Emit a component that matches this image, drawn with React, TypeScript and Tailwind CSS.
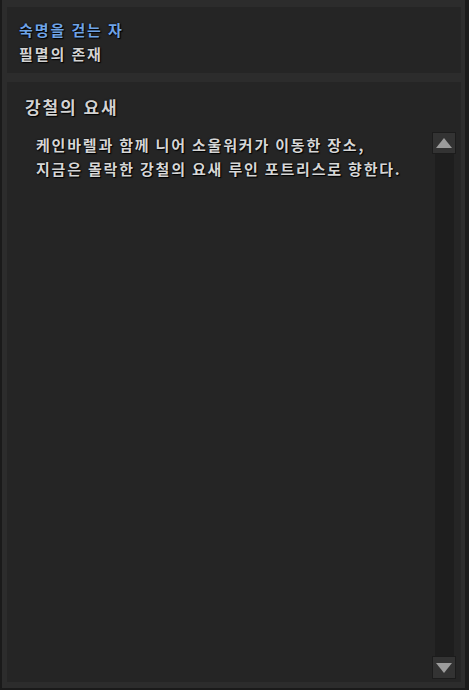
export default function App() {
  const font = { fontFamily: '"Noto Sans CJK KR", "Noto Sans", sans-serif' };
  const shadow = "[text-shadow:1px_1px_1px_#000,0_0_2px_#000]";

  return (
    <div
      className="w-[469px] h-[690px] bg-[#2c2c2c] border-l-2 border-r-4 border-b-2 border-[#1a1a1a] pl-[5px] pt-[7px] pb-[6px] flex flex-col gap-[9px]"
      style={font}
    >
      {/* 상단 정보 */}
      <div className="w-[454px] h-[66px] bg-[#252525] pl-[12px] pt-[11px] flex flex-col">
        <p className={`text-[15px] leading-[24px] font-semibold tracking-[1.9px] text-[#6fa3e6] ${shadow}`}>숙명을 걷는 자</p>
        <p className={`text-[15px] leading-[24px] font-semibold tracking-[1.9px] text-[#d4d4d4] ${shadow}`}>필멸의 존재</p>
      </div>

      {/* 지역 설명 */}
      <div className="w-[454px] flex-1 bg-[#252525] flex">
        <div className="flex-1 pl-[18px] pt-[13px]">
          <h2 className={`text-[17px] leading-[24px] font-semibold tracking-[1.9px] text-[#d2d2d2] ${shadow}`}>강철의 요새</h2>
          <p className={`mt-[14px] pl-[11px] text-[15px] leading-[24px] font-semibold tracking-[1.8px] text-[#d6d6d6] ${shadow}`}>
            케인바렐과 함께 니어 소울워커가 이동한 장소,
            <br />
            지금은 몰락한 강철의 요새 루인 포트리스로 향한다.
          </p>
        </div>

        {/* 스크롤바 */}
        <div className="w-[24px] mr-[5px] pt-[50px] pb-[3px] flex flex-col items-center">
          <div className="w-[24px] h-[22px] bg-[#333] border border-[#1c1c1c] flex items-center justify-center">
            <div className="w-0 h-0 border-l-[8px] border-r-[8px] border-b-[10px] border-l-transparent border-r-transparent border-b-[#9c9c9c]" />
          </div>
          <div className="w-[19px] flex-1 bg-[#1e1e1e]" />
          <div className="w-[24px] h-[23px] bg-[#333] border border-[#1c1c1c] flex items-center justify-center">
            <div className="w-0 h-0 border-l-[8px] border-r-[8px] border-t-[10px] border-l-transparent border-r-transparent border-t-[#9c9c9c]" />
          </div>
        </div>
      </div>
    </div>
  );
}
